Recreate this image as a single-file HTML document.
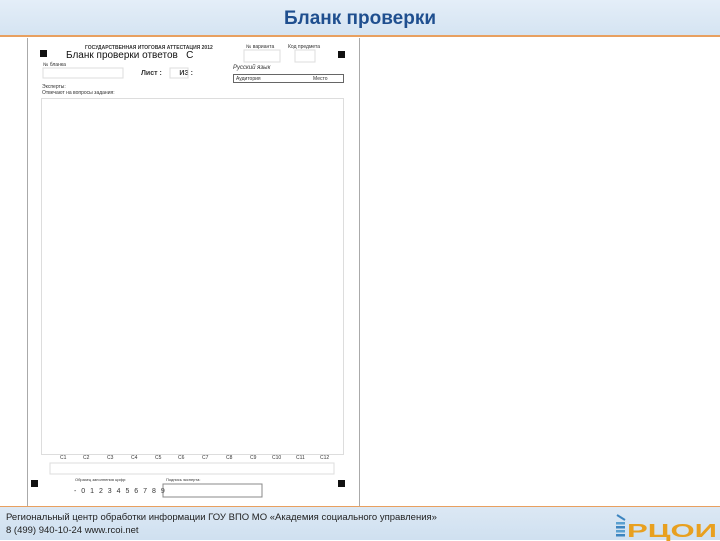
<!DOCTYPE html>
<html><head><meta charset="utf-8"><style>
*{margin:0;padding:0;box-sizing:border-box}
body{width:720px;height:540px;position:relative;background:#fff;font-family:"Liberation Sans",sans-serif;overflow:hidden}
.hdr{position:absolute;left:0;top:0;width:720px;height:37px;background:linear-gradient(#e4eef8,#d5e4f2);border-bottom:2px solid #e8a060}
.hdr h1{position:absolute;left:0;width:720px;top:8px;text-align:center;font-size:19px;color:#1f4f8f;font-weight:bold}
.ftr{position:absolute;left:0;top:506px;width:720px;height:34px;background:linear-gradient(#dce8f4,#cfe0f0);border-top:1px solid #e8a060}
.ftr p{position:absolute;left:6px;font-size:9.5px;color:#222}
.doc{position:absolute;left:27px;top:38px;width:333px;height:469px;border:1px solid #aaa;border-top:none;background:#fff}
.a{position:absolute}
.sq{position:absolute;width:7px;height:7px;background:#111}
.t{position:absolute;font-size:5px;color:#333;white-space:nowrap}
.box{position:absolute;border:1px solid #ddd}
</style></head><body>
<div class="hdr"><h1>Бланк проверки</h1></div>
<div class="doc">
<div class="sq" style="left:12px;top:12px"></div>
<div class="sq" style="left:310px;top:13px"></div>
<div class="sq" style="left:3px;top:442px"></div>
<div class="sq" style="left:310px;top:442px"></div>
<div class="t" style="left:57px;top:7px;font-weight:bold">ГОСУДАРСТВЕННАЯ ИТОГОВАЯ АТТЕСТАЦИЯ 2012</div>
<div class="t" style="left:38px;top:12px;font-size:10px;color:#111">Бланк проверки ответов &nbsp;&nbsp;С</div>
<div class="t" style="left:15px;top:24px">№ бланка</div>
<div class="t" style="left:218px;top:6px">№ варианта</div>
<div class="t" style="left:260px;top:6px">Код предмета</div>
<div class="t" style="left:113px;top:32px;font-size:7px;font-weight:bold">Лист : &nbsp;&nbsp;&nbsp;&nbsp;&nbsp;&nbsp;&nbsp; ИЗ :</div>
<div class="t" style="left:205px;top:27px;font-size:6px;font-style:italic">Русский язык</div>
<div class="box" style="left:205px;top:36px;width:111px;height:9px;border-color:#666"></div>
<div class="t" style="left:208px;top:38px">Аудитория</div>
<div class="t" style="left:285px;top:38px">Место</div>
<div class="t" style="left:14px;top:46px">Эксперты:</div>
<div class="t" style="left:14px;top:52px">Отвечают на вопросы задания:</div>
<div class="box" style="left:13px;top:60px;width:303px;height:357px"></div>
<svg class="a" style="left:0;top:0" width="333" height="469">
<g fill="none" stroke="#ddd" stroke-width="1">
<rect x="15" y="30" width="80" height="10"/>
<rect x="142" y="30" width="18" height="10"/>
<rect x="216" y="12" width="36" height="12"/>
<rect x="267" y="12" width="20" height="12"/>
<rect x="22" y="425" width="284" height="11"/>
</g>
<g font-family="Liberation Sans" font-size="5" fill="#333">
<text x="32" y="421">С1</text><text x="55" y="421">С2</text><text x="79" y="421">С3</text><text x="103" y="421">С4</text><text x="127" y="421">С5</text><text x="150" y="421">С6</text><text x="174" y="421">С7</text><text x="198" y="421">С8</text><text x="222" y="421">С9</text><text x="244" y="421">С10</text><text x="268" y="421">С11</text><text x="292" y="421">С12</text>
<text x="47" y="443" font-size="4">Образец заполнения цифр:</text>
<text x="138" y="443" font-size="4">Подпись эксперта:</text>
<text x="46" y="455" font-size="7" letter-spacing="1.5">- 0 1 2 3 4 5 6 7 8 9</text>
</g>
<rect x="135" y="446" width="99" height="13" fill="none" stroke="#888"/>
</svg>
</div>
<div class="ftr">
<p style="top:5px">Региональный центр обработки информации ГОУ ВПО МО «Академия социального управления»</p>
<p style="top:18px">8 (499) 940-10-24 www.rcoi.net</p>
<svg style="position:absolute;left:614px;top:4px" width="106" height="30">
<rect x="2" y="11" width="9" height="2.5" fill="#5aa0d0"/><rect x="2" y="15" width="9" height="2.5" fill="#3d85c0"/><rect x="2" y="19" width="9" height="2.5" fill="#5aa0d0"/><rect x="2" y="23" width="9" height="2.5" fill="#3d85c0"/>
<path d="M3 4 L11 9" stroke="#3d85c0" stroke-width="2"/>
<text x="13" y="26" font-family="Liberation Sans" font-weight="bold" font-size="18" fill="#e8a020" textLength="90" lengthAdjust="spacingAndGlyphs">РЦОИ</text>
</svg>
</div>
</body></html>
